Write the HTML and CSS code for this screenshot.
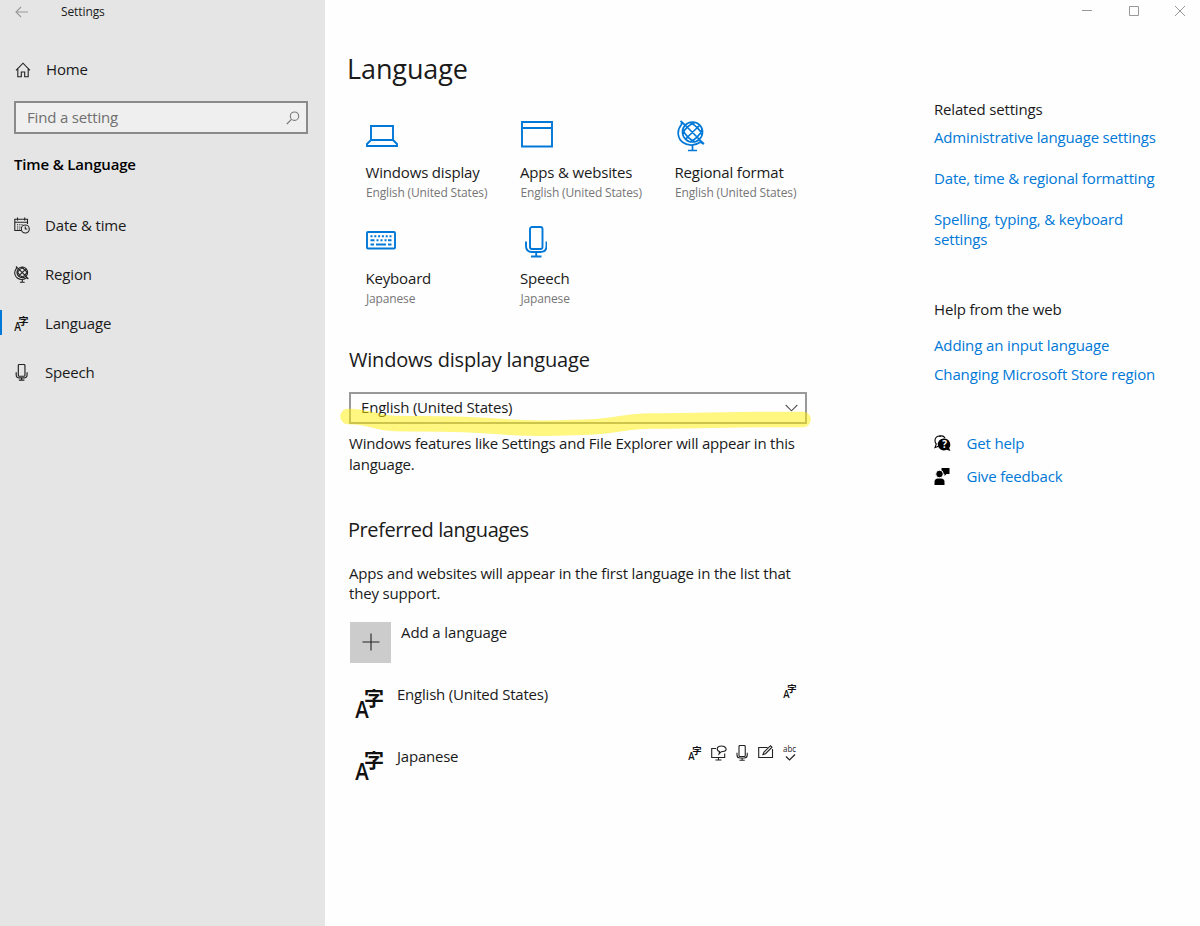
FILE: index.html
```
<!DOCTYPE html>
<html lang="en">
<head>
    <meta charset="UTF-8">
    <meta name="viewport" content="width=device-width, initial-scale=1.0">
    <title>Settings</title>
    <link rel="stylesheet" href="styles.css">
</head>
<body>
    <!-- Shared icons -->
    <svg class="defs" width="0" height="0">
        <symbol id="lang" viewBox="0 0 30 30">
            <text class="glyph-a" x="0.3" y="29" textLength="13.500" lengthAdjust="spacingAndGlyphs">A</text>
            <text class="glyph-ji" x="9" y="17.2">字</text>
        </symbol>
        <symbol id="mic" viewBox="0 0 22 32">
            <rect x="5" y="1" width="12.5" height="22" rx="2"/>
            <path d="M1 15.500v4.500q0 6 6 6h8.500q6 0 6-6v-4.500M11.200 26v4.500M6 30.500h10.500"/>
        </symbol>
        <symbol id="globe" viewBox="0 0 28 32">
            <circle cx="15.500" cy="12" r="10"/>
            <path d="M4.500 1v3.500C-1 11 1 19 6 22.500c5 3.500 12 3.500 17.500-.5l3 2M3.500 1l4.500 4M22 19.500l5 4.500M8.500 5.500L22.500 19.500M22.500 5.500L8.500 19M13 2.500C18 5 24 10 25 15M6 10C8 15 13 20 18 21.500M18 2.500C13 4 7 9 6 14M25 10C23 15 18 20 13 21.500M15.500 25.500v4.500M11 30.500h9"/>
        </symbol>
    </svg>

    <div class="app">
        <nav class="sidebar">
            <div class="titlebar">
                <svg class="back" width="14" height="12" viewBox="0 0 14 12"><path d="M13 6H1M6 1L1 6l5 5"/></svg>
                <span>Settings</span>
            </div>
            <a class="nav-item home">
                <svg width="16" height="16" viewBox="0 0 16 16"><path d="M1 8.300L8 1.200l7 7.100M2.800 7v7.800h3.500V10h3.400v4.800h3.500V7"/></svg>
                <span>Home</span>
            </a>
            <div class="search">
                <span>Find a setting</span>
                <svg width="14" height="14" viewBox="0 0 14 14"><circle cx="8.500" cy="5.200" r="4.200"/><path d="M5.500 8.300L.8 13"/></svg>
            </div>
            <h3>Time &amp; Language</h3>
            <a class="nav-item">
                <svg class="calendar" width="16" height="17" viewBox="0 0 16 17"><path d="M7 13.500H.8V2.200h12.700V7M.8 5.200h12.700M3.500.5v3M10.700.5v3"/><path class="dots" d="M3 7.700h6M3 10h4M3 12h3"/><circle cx="11.300" cy="12" r="4"/><path d="M11.300 9.500V12h2"/></svg>
                <span>Date &amp; time</span>
            </a>
            <a class="nav-item">
                <svg class="globe-small" width="15" height="17"><use href="#globe"/></svg>
                <span>Region</span>
            </a>
            <a class="nav-item active">
                <svg class="lang" width="15" height="15"><use href="#lang"/></svg>
                <span>Language</span>
            </a>
            <a class="nav-item">
                <svg class="mic-small" width="15" height="17"><use href="#mic"/></svg>
                <span>Speech</span>
            </a>
        </nav>

        <div class="page">
            <div class="window-controls">
                <svg width="12" height="12" viewBox="0 0 12 12"><path d="M1 5.500h10"/></svg>
                <svg width="12" height="12" viewBox="0 0 12 12"><path d="M1.500 1.500h9v9h-9z"/></svg>
                <svg width="12" height="12" viewBox="0 0 12 12"><path d="M1 1l10 10M11 1L1 11"/></svg>
            </div>

            <div class="columns">
                <main class="content">
                    <h1>Language</h1>

                    <div class="tiles">
                        <div class="tile">
                            <div class="tile-icon"><svg width="32" height="30" viewBox="0 0 32 30"><path d="M5 5h22v14H5zM5 19l-4 4v2h30v-2l-4-4"/></svg></div>
                            <div class="tile-name">Windows display</div>
                            <div class="tile-value">English (United States)</div>
                        </div>
                        <div class="tile">
                            <div class="tile-icon"><svg width="32" height="30" viewBox="0 0 32 30"><path d="M1 1h30v24.500H1zM1 7h30"/></svg></div>
                            <div class="tile-name">Apps &amp; websites</div>
                            <div class="tile-value">English (United States)</div>
                        </div>
                        <div class="tile">
                            <div class="tile-icon"><svg class="globe" width="28" height="32"><use href="#globe"/></svg></div>
                            <div class="tile-name">Regional format</div>
                            <div class="tile-value">English (United States)</div>
                        </div>
                        <div class="tile">
                            <div class="tile-icon"><svg width="32" height="30" viewBox="0 0 32 30"><rect x="1" y="5" width="28" height="16.500" rx="1"/><path class="keys" d="M4.500 9.300h21"/><path d="M4.500 13.200h4M10.500 13.200h2M14.500 13.200h2M18.500 13.200h2M22 13.200h3.500M4.500 17.500h3.500M10 17.500h10M22 17.500h3.500"/></svg></div>
                            <div class="tile-name">Keyboard</div>
                            <div class="tile-value">Japanese</div>
                        </div>
                        <div class="tile">
                            <div class="tile-icon"><svg class="mic" width="22" height="32"><use href="#mic"/></svg></div>
                            <div class="tile-name">Speech</div>
                            <div class="tile-value">Japanese</div>
                        </div>
                    </div>

                    <h2>Windows display language</h2>
                    <div class="select">
                        <span>English (United States)</span>
                        <svg class="chevron" width="13" height="8" viewBox="0 0 13 8"><path d="M.7 1l5.800 5.800L12.300 1"/></svg>
                        <svg class="marker" width="474" height="32" viewBox="338 406 474 32"><path d="M348 416.500C370 416.500 375 423 395 423.500S460 423 500 426.500S565 427.500 590 427S625 421 650 421S715 420 740 419.700S785 419.500 803 419.500"/></svg>
                    </div>
                    <p class="note">Windows features like Settings and File Explorer will appear in this<br>language.</p>

                    <h2 class="preferred">Preferred languages</h2>
                    <p>Apps and websites will appear in the first language in the list that<br>they support.</p>

                    <div class="add">
                        <div class="add-box"><svg width="18" height="18" viewBox="0 0 18 18"><path d="M9 .5v17M.5 9h17"/></svg></div>
                        <span>Add a language</span>
                    </div>

                    <div class="language">
                        <svg class="lang" width="30" height="30"><use href="#lang"/></svg>
                        <span class="language-name">English (United States)</span>
                        <div class="features">
                            <svg class="lang" width="14" height="14"><use href="#lang"/></svg>
                        </div>
                    </div>
                    <div class="language">
                        <svg class="lang" width="30" height="30"><use href="#lang"/></svg>
                        <span class="language-name">Japanese</span>
                        <div class="features">
                            <svg class="lang" width="14" height="14"><use href="#lang"/></svg>
                            <svg width="16" height="16" viewBox="0 0 16 16"><path d="M5 3.500H.7v9h13V8.500M4.500 15h6M7.500 12.500V15"/><path d="M8.500 6.500C5 5.500 5.500 1 10.300 1s6.500 4 3 5.300c-1 .4-2 .4-3 .4L8 9z"/></svg>
                            <svg class="mic-small" width="12" height="16"><use href="#mic"/></svg>
                            <svg width="16" height="16" viewBox="0 0 16 16"><path d="M9.500 2.500H.7v10h13.800V4M5 9.500l1-2.500L12.500.7l1.500 1.500L7.500 8.700z"/></svg>
                            <svg class="abc" width="14" height="16" viewBox="0 0 14 16"><text x="0" y="7" textLength="13" lengthAdjust="spacingAndGlyphs">abc</text><path d="M3 11.500l3.500 3.500 5.500-5.500"/></svg>
                        </div>
                    </div>
                </main>

                <aside class="related">
                    <h4>Related settings</h4>
                    <a>Administrative language settings</a>
                    <a>Date, time &amp; regional formatting</a>
                    <a>Spelling, typing, &amp; keyboard<br>settings</a>
                    <h4 class="web">Help from the web</h4>
                    <a class="web-link">Adding an input language</a>
                    <a class="web-link">Changing Microsoft Store region</a>
                    <div class="support">
                        <svg width="17" height="17" viewBox="0 0 17 17"><path class="outline" d="M7 1C3 .5.700 3 1 6c.1 1.500.7 2.500 1.300 3L1 12.500l3.500-1.300"/><path class="outline" d="M5 1.300C8 .3 10 1.200 11 3"/><path d="M10.500 3.500a6 6 0 1 0 2 11.300l4 1.200-1.400-3A6 6 0 0 0 10.500 3.500z"/><text x="8.200" y="13">?</text></svg>
                        <a>Get help</a>
                    </div>
                    <div class="support">
                        <svg width="17" height="17" viewBox="0 0 17 17"><path d="M7.500 0h8v6h-3l-2 2V6H7.500z"/><circle class="head" cx="5.500" cy="6" r="3.800"/><path d="M.5 17v-3q0-3.500 3.500-3.500h3q3.500 0 3.500 3.500v3z"/></svg>
                        <a>Give feedback</a>
                    </div>
                </aside>
            </div>
        </div>
    </div>
</body>
</html>
```
FILE: styles.css
```
body {
    margin: 0;
    font-family: "Open Sans", "Noto Sans", sans-serif;
    font-size: 15px;
    line-height: 20.5px;
    letter-spacing: -0.17px;
    color: #1a1a1a;
    background: #fefefe;
}

h1, h2, h3, h4, p {
    margin: 0;
    font-weight: 400;
}

svg {
    display: block;
    flex: none;
    fill: none;
    stroke: #222;
    stroke-width: 1.1;
    overflow: visible;
}

.defs {
    display: none;
}

.app {
    display: flex;
    height: 926px;
    overflow: hidden;
}

/* Sidebar */
.sidebar {
    width: 325px;
    flex: none;
    background: #e5e5e5;
}

.titlebar {
    display: flex;
    align-items: center;
    height: 24px;
    padding-left: 15px;
    font-size: 12px;
    letter-spacing: -0.1px;
}

.titlebar span {
    padding-top: 1px;
}

.titlebar .back {
    margin-right: 32px;
    stroke: #999;
}

.nav-item {
    display: flex;
    align-items: center;
    height: 49px;
    padding-left: 14px;
}

.nav-item svg {
    margin-right: 16px;
}

.nav-item .calendar {
    margin-right: 15px;
}

.nav-item.home {
    margin-top: 21px;
    padding-left: 15px;
}

.nav-item.home svg {
    margin-right: 15px;
}

.nav-item.active {
    background: linear-gradient(#0078d7, #0078d7) 0 11px / 2px 25px no-repeat;
}

.search {
    display: flex;
    align-items: center;
    justify-content: space-between;
    box-sizing: border-box;
    width: 294px;
    height: 33px;
    margin: 7px 0 0 14px;
    padding: 0 6px 0 11px;
    border: 2px solid #8a8a8a;
    background: #efefef;
    color: #707070;
}

.search svg {
    stroke: #777;
}

.sidebar h3 {
    margin: 20px 0 27px 14px;
    font-size: 15px;
    font-weight: 600;
    line-height: 20px;
    color: #000;
}

.lang {
    stroke: none;
    fill: #111;
}

.glyph-a {
    font-family: "Open Sans", sans-serif;
    font-size: 24px;
    font-weight: 600;
    letter-spacing: 0;
}

.glyph-ji {
    font-family: "Noto Sans CJK JP", sans-serif;
    font-size: 20px;
    font-weight: 700;
    letter-spacing: 0;
}

.mic-small {
    stroke-width: 2.2;
}

.globe-small {
    stroke-width: 2.1;
}

.dots {
    stroke-dasharray: 1.2 1;
}

/* Page */
.page {
    flex: 1;
}

.window-controls {
    display: flex;
    justify-content: flex-end;
    align-items: center;
    gap: 34.5px;
    height: 22px;
    margin-bottom: 2px;
    padding-right: 14px;
}

.window-controls svg {
    stroke: #999;
    stroke-width: 1;
}

.columns {
    display: flex;
}

.content {
    width: 458px;
    margin-left: 24px;
}

h1 {
    margin: 25px 0 25px -2px;
    font-size: 27px;
    line-height: 40px;
    letter-spacing: -0.1px;
}

.tiles {
    display: grid;
    grid-template-columns: repeat(3, 154.5px);
    grid-auto-rows: 106px;
    margin-left: 17px;
}

.tile-icon {
    display: flex;
    align-items: center;
    height: 43px;
    margin-bottom: 5px;
}

.tile-icon svg {
    stroke: #0078d7;
    stroke-width: 1.9;
}

.tile-icon .globe {
    margin-left: 2px;
    stroke-width: 1.7;
}

.tile-icon .mic {
    margin-left: 4px;
}

.keys {
    stroke-dasharray: 2 1.8;
}

.tile-name {
    margin-left: -0.5px;
}

.tile-value {
    font-size: 12px;
    letter-spacing: -0.15px;
    color: #767676;
}

h2 {
    margin-top: 19.5px;
    font-size: 20px;
    line-height: 28px;
    letter-spacing: -0.2px;
}

.select {
    position: relative;
    display: flex;
    align-items: center;
    justify-content: space-between;
    box-sizing: border-box;
    height: 32px;
    margin: 18.5px 0 9px;
    padding: 0 7px 0 10px;
    border: 2px solid #999;
}

.select span {
    padding-bottom: 1px;
    letter-spacing: -0.2px;
}

.chevron {
    stroke: #555;
}

/* Highlighter stroke over the select */
.marker {
    position: absolute;
    left: -13px;
    top: 12px;
    stroke: #fff000;
    stroke-opacity: 0.5;
    stroke-width: 15.5;
    stroke-linecap: round;
}

.note {
    letter-spacing: -0.22px;
}

h2.preferred {
    margin: 42px 0 18.5px -1px;
    letter-spacing: -0.42px;
}

.add {
    display: flex;
    margin: 18px 0 0 1px;
}

.add span {
    letter-spacing: -0.1px;
}

.add-box {
    display: flex;
    align-items: center;
    justify-content: center;
    width: 41px;
    height: 41px;
    margin-right: 10px;
    background: #ccc;
}

.language {
    display: flex;
    height: 62px;
    padding-left: 6px;
}

.add + .language {
    margin-top: 21px;
}

.language > .lang {
    margin-top: 5px;
}

.language-name {
    margin-left: 12px;
    letter-spacing: -0.22px;
}

.features {
    display: flex;
    align-items: center;
    gap: 9.3px;
    height: 14px;
    margin: 0 10px 0 auto;
}

.abc {
    stroke-width: 1.2;
}

.abc text {
    font-size: 9px;
    letter-spacing: 0;
    stroke: none;
    fill: #222;
}

/* Right column */
.related {
    margin: 75px 0 0 127px;
}

h4 {
    margin-bottom: 7.5px;
    font-size: 15px;
}

.related a {
    display: block;
    margin-bottom: 20.3px;
    color: #0078d7;
}

h4.web {
    margin: 49px 0 16px;
}

.related .web-link {
    margin-bottom: 8px;
    letter-spacing: -0.13px;
}

.support {
    display: flex;
    align-items: center;
    height: 33px;
}

.web-link + .support {
    margin-top: 43px;
}

.support svg {
    margin-right: 15.5px;
    stroke: none;
    fill: #000;
}

.support .outline {
    stroke: #000;
    stroke-width: 1.1;
    fill: none;
}

.support text {
    font-size: 10px;
    font-weight: 700;
    fill: #fff;
}

.support .head {
    stroke: #fefefe;
    stroke-width: 1;
}

.related .support a {
    margin: 0;
}
```
